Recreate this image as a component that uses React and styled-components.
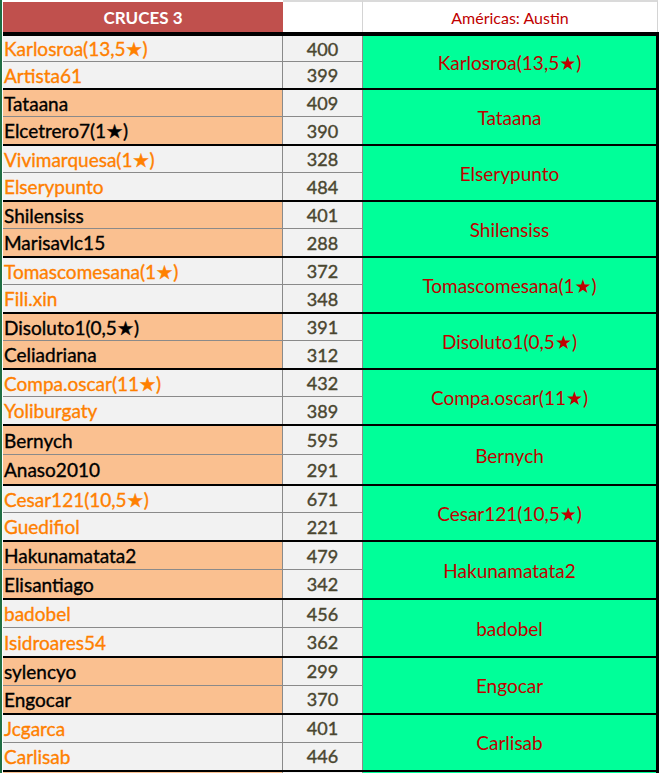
import React from "react";
import styled, { createGlobalStyle } from "styled-components";

const GlobalStyle = createGlobalStyle`
  html, body {
    margin: 0;
    padding: 0;
    background: #ffffff;
    overflow: hidden;
  }
  body {
    font-family: Lato, "Open Sans", "DejaVu Sans", sans-serif;
  }
  * {
    box-sizing: border-box;
  }
`;

const cruces = [
  { a: "Karlosroa(13,5★)", pa: 400, b: "Artista61", pb: 399, win: "Karlosroa(13,5★)", h: 54 },
  { a: "Tataana", pa: 409, b: "Elcetrero7(1★)", pb: 390, win: "Tataana", h: 56 },
  { a: "Vivimarquesa(1★)", pa: 328, b: "Elserypunto", pb: 484, win: "Elserypunto", h: 56 },
  { a: "Shilensiss", pa: 401, b: "Marisavlc15", pb: 288, win: "Shilensiss", h: 56 },
  { a: "Tomascomesana(1★)", pa: 372, b: "Fili.xin", pb: 348, win: "Tomascomesana(1★)", h: 56 },
  { a: "Disoluto1(0,5★)", pa: 391, b: "Celiadriana", pb: 312, win: "Disoluto1(0,5★)", h: 56 },
  { a: "Compa.oscar(11★)", pa: 432, b: "Yoliburgaty", pb: 389, win: "Compa.oscar(11★)", h: 56 },
  { a: "Bernych", pa: 595, b: "Anaso2010", pb: 291, win: "Bernych", h: 60 },
  { a: "Cesar121(10,5★)", pa: 671, b: "Guedifiol", pb: 221, win: "Cesar121(10,5★)", h: 56 },
  { a: "Hakunamatata2", pa: 479, b: "Elisantiago", pb: 342, win: "Hakunamatata2", h: 58 },
  { a: "badobel", pa: 456, b: "Isidroares54", pb: 362, win: "badobel", h: 58 },
  { a: "sylencyo", pa: 299, b: "Engocar", pb: 370, win: "Engocar", h: 57 },
  { a: "Jcgarca", pa: 401, b: "Carlisab", pb: 446, win: "Carlisab", h: 57 },
  { a: "", pa: "", b: "", pb: "", win: "", h: 56 },
];

const Sheet = styled.div`
  display: flex;
  align-items: flex-start;
  height: 773px;
  overflow: hidden;
`;

const Edge = styled.div`
  width: 2px;
  height: 773px;
  margin-right: 1px;
  background: #1f6f43;
  flex-shrink: 0;
`;

const Table = styled.div`
  width: 656px;
  display: flex;
  flex-direction: column;
`;

const HeaderRow = styled.div`
  flex-shrink: 0;
  display: grid;
  grid-template-columns: 280px 80px 296px;
  height: 34px;
  border-bottom: 2px solid #000;
`;

const TitleCell = styled.div`
  margin-top: 2px;
  background: #c0504d;
  color: #ffffff;
  font-weight: 700;
  font-size: 17px;
  display: flex;
  align-items: center;
  justify-content: center;
`;

const BlankHead = styled.div`
  border-top: 2px solid #dadada;
  border-right: 1px solid #d4d4d4;
  background: #ffffff;
`;

const EventHead = styled.div`
  border-top: 2px solid #dadada;
  border-right: 1px solid #d4d4d4;
  margin-right: 1px;
  color: #c00000;
  font-size: 16px;
  display: flex;
  align-items: center;
  justify-content: center;
`;

const Group = styled.div`
  flex-shrink: 0;
  display: grid;
  grid-template-columns: 280px 80px 296px;
  grid-template-rows: 1fr 1fr;
  height: ${(p) => p.$h}px;
  border-top: 2px solid #000;
`;

const NameCell = styled.div`
  background: ${(p) => (p.$odd ? "#f2f2f2" : "#fac090")};
  color: ${(p) => (p.$odd ? "#ff8000" : "#000000")};
  border-right: 1px solid #8a8a8a;
  border-bottom: ${(p) => (p.$first ? "1px solid #8a8a8a" : "none")};
  font-size: 19px;
  -webkit-text-stroke: 0.35px currentColor;
  padding-left: 1px;
  display: flex;
  align-items: center;
  white-space: nowrap;
`;

const ScoreCell = styled.div`
  background: #f2f2f2;
  color: #4a4630;
  border-right: 1px solid #8a8a8a;
  border-bottom: ${(p) => (p.$first ? "1px solid #8a8a8a" : "none")};
  font-size: 18px;
  -webkit-text-stroke: 0.4px currentColor;
  display: flex;
  align-items: center;
  justify-content: center;
`;

const WinnerCell = styled.div`
  grid-column: 3;
  grid-row: 1 / span 2;
  background: #00ff99;
  color: #c00000;
  border-right: 3px solid #000;
  margin-right: 0;
  font-size: 19px;
  display: flex;
  align-items: center;
  justify-content: center;
  white-space: nowrap;
`;

function Cruce({ row, odd }) {
  return (
    <Group $h={row.h}>
      <NameCell $odd={odd} $first>{row.a}</NameCell>
      <ScoreCell $first>{row.pa}</ScoreCell>
      <WinnerCell>{row.win}</WinnerCell>
      <NameCell $odd={odd}>{row.b}</NameCell>
      <ScoreCell>{row.pb}</ScoreCell>
    </Group>
  );
}

export default function App() {
  return (
    <>
      <GlobalStyle />
      <Sheet>
        <Edge />
        <Table>
          <HeaderRow>
            <TitleCell>CRUCES 3</TitleCell>
            <BlankHead />
            <EventHead>Américas: Austin</EventHead>
          </HeaderRow>
          {cruces.map((row, i) => (
            <Cruce key={i} row={row} odd={i % 2 === 0} />
          ))}
        </Table>
      </Sheet>
    </>
  );
}
